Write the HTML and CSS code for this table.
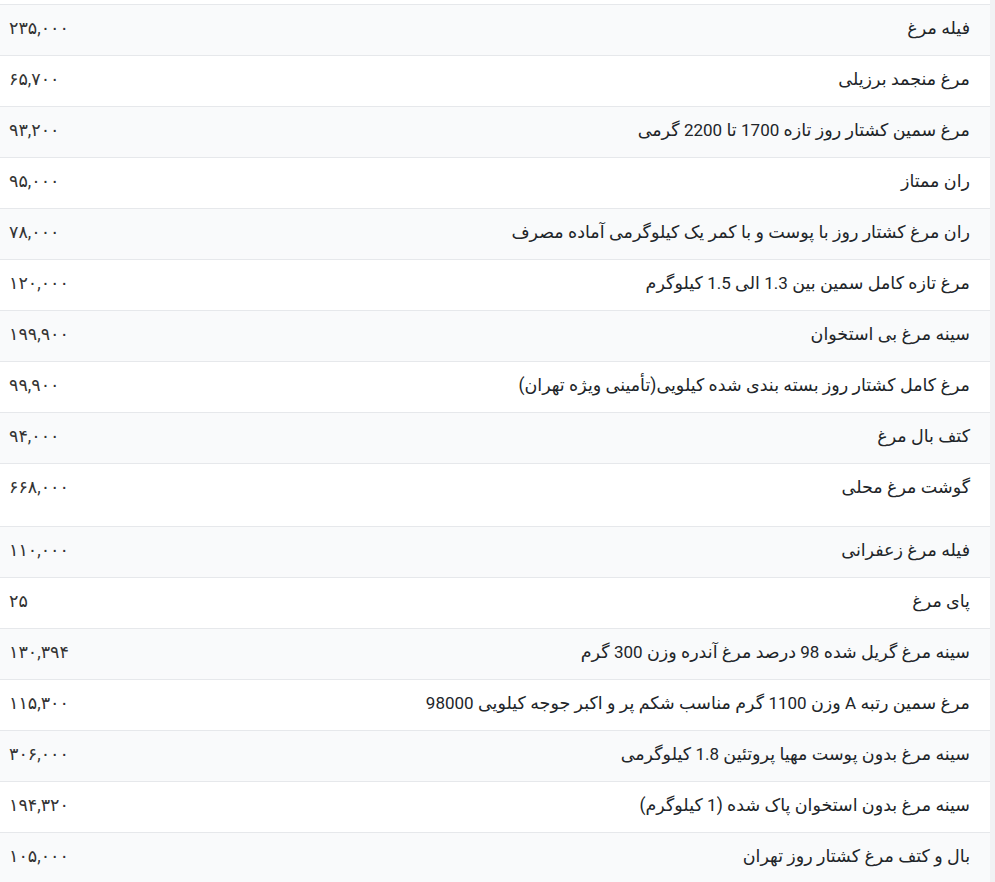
FILE: index.html
```html
<!DOCTYPE html>
<html lang="fa" dir="rtl">
<head>
<meta charset="utf-8">
<link rel="stylesheet" href="styles.css">
</head>
<body>
<div class="wrap">
<table class="prices">
<tbody>
<tr><td class="name">فیله مرغ</td><td class="price">۲۳۵,۰۰۰</td></tr>
<tr><td class="name">مرغ منجمد برزیلی</td><td class="price">۶۵,۷۰۰</td></tr>
<tr><td class="name">مرغ سمین کشتار روز تازه <span class="lat">1700</span> تا <span class="lat">2200</span> گرمی</td><td class="price">۹۳,۲۰۰</td></tr>
<tr><td class="name">ران ممتاز</td><td class="price">۹۵,۰۰۰</td></tr>
<tr><td class="name">ران مرغ کشتار روز با پوست و با کمر یک کیلوگرمی آماده مصرف</td><td class="price">۷۸,۰۰۰</td></tr>
<tr><td class="name">مرغ تازه کامل سمین بین <span class="lat">1.3</span> الی <span class="lat">1.5</span> کیلوگرم</td><td class="price">۱۲۰,۰۰۰</td></tr>
<tr><td class="name">سینه مرغ بی استخوان</td><td class="price">۱۹۹,۹۰۰</td></tr>
<tr><td class="name">مرغ کامل کشتار روز بسته بندی شده کیلویی(تأمینی ویژه تهران)</td><td class="price">۹۹,۹۰۰</td></tr>
<tr><td class="name">کتف بال مرغ</td><td class="price">۹۴,۰۰۰</td></tr>
<tr class="tall"><td class="name">گوشت مرغ محلی</td><td class="price">۶۶۸,۰۰۰</td></tr>
<tr><td class="name">فیله مرغ زعفرانی</td><td class="price">۱۱۰,۰۰۰</td></tr>
<tr><td class="name">پای مرغ</td><td class="price">۲۵</td></tr>
<tr><td class="name">سینه مرغ گریل شده <span class="lat">98</span> درصد مرغ آندره وزن <span class="lat">300</span> گرم</td><td class="price">۱۳۰,۳۹۴</td></tr>
<tr><td class="name">مرغ سمین رتبه <span class="lat">A</span> وزن <span class="lat">1100</span> گرم مناسب شکم پر و اکبر جوجه کیلویی <span class="lat">98000</span></td><td class="price">۱۱۵,۳۰۰</td></tr>
<tr><td class="name">سینه مرغ بدون پوست مهیا پروتئین <span class="lat">1.8</span> کیلوگرمی</td><td class="price">۳۰۶,۰۰۰</td></tr>
<tr><td class="name">سینه مرغ بدون استخوان پاک شده (<span class="lat">1</span> کیلوگرم)</td><td class="price">۱۹۴,۳۲۰</td></tr>
<tr><td class="name">بال و کتف مرغ کشتار روز تهران</td><td class="price">۱۰۵,۰۰۰</td></tr>
</tbody>
</table>
</div>
</body>
</html>
```
FILE: styles.css
```css
html, body {
  margin: 0;
  padding: 0;
  background: #ffffff;
}
body {
  font-family: Roboto, "DejaVu Sans", sans-serif;
  color: #212529;
}
.wrap {
  width: 990px;
  padding-top: 4px;
  border-right: 5px solid #f1f2f4;
}
.prices {
  width: 100%;
  border-collapse: collapse;
  font-size: 17.5px;
}
.prices tr {
  border-top: 1px solid #e6e8eb;
}
.prices tr:nth-child(odd) {
  background: #f9fafb;
}
.prices td {
  height: 50px;
  padding: 0;
  vertical-align: top;
  line-height: 46px;
}
.prices tr.tall td {
  height: 62px;
}
.lat {
  font-size: 17px;
}
.name {
  text-align: right;
  padding-right: 20px !important;
}
.price {
  text-align: left;
  padding-left: 9px !important;
  color: #333333;
  white-space: nowrap;
}
```
